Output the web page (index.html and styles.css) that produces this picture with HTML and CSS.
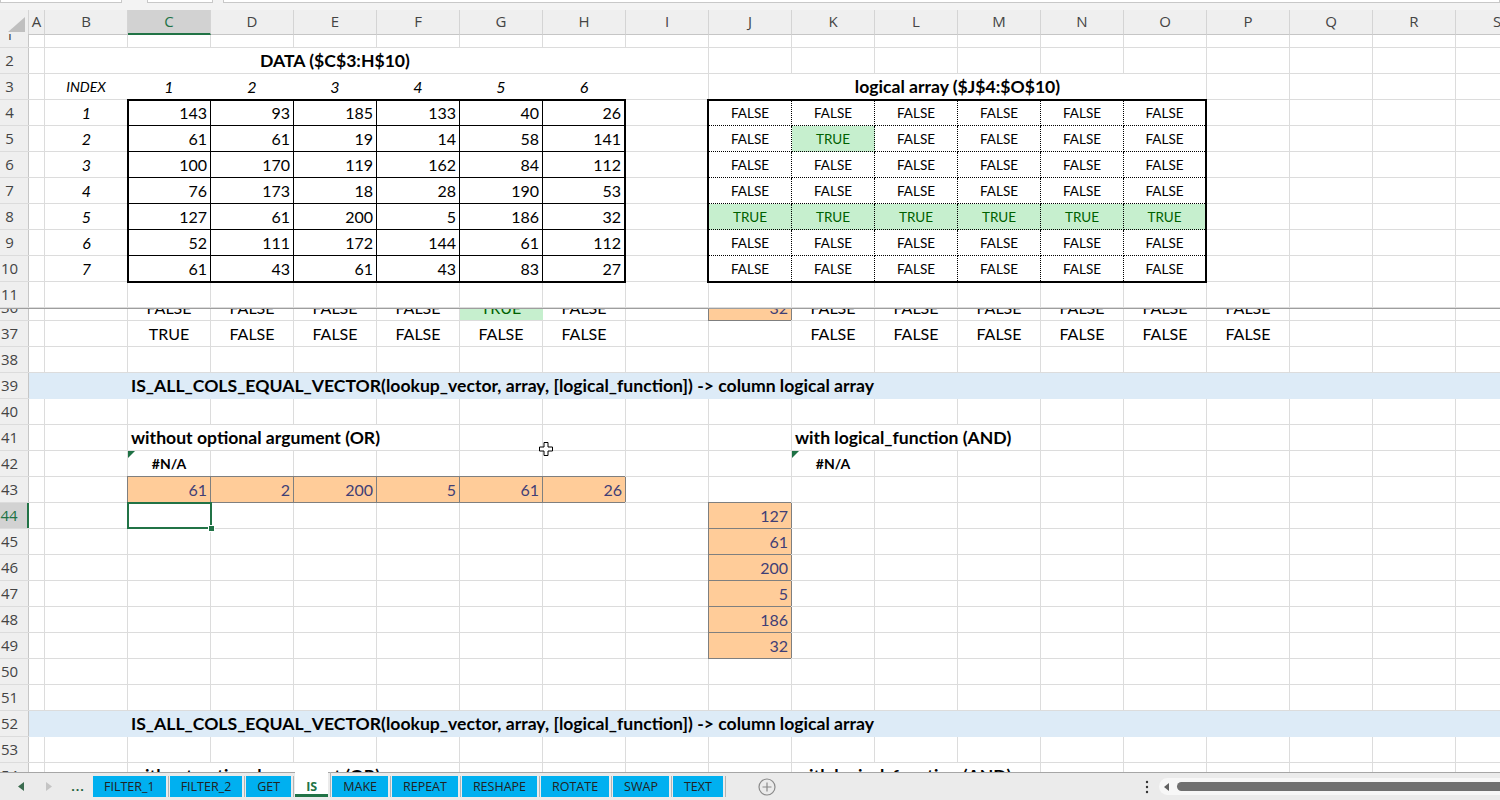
FILE: index.html
```html
<!DOCTYPE html>
<html lang="en">
<head>
    <meta charset="UTF-8">
    <title>IS</title>
    <link rel="stylesheet" href="styles.css">
</head>
<body>
<div class="app">

    <!-- bottom edge of the formula bar -->
    <div class="fbar">
        <div class="fbox name"></div>
        <div class="fbox fx"></div>
        <div class="fbox formula"></div>
    </div>

    <!-- column headers -->
    <div class="colheads">
        <div class="corner"><svg width="17" height="15" viewBox="0 0 17 15"><path d="M17 0V15H0Z" fill="#bfbfbf"/></svg></div>
        <div class="ch">A</div>
        <div class="ch">B</div>
        <div class="ch on">C</div>
        <div class="ch">D</div>
        <div class="ch">E</div>
        <div class="ch">F</div>
        <div class="ch">G</div>
        <div class="ch">H</div>
        <div class="ch">I</div>
        <div class="ch">J</div>
        <div class="ch">K</div>
        <div class="ch">L</div>
        <div class="ch">M</div>
        <div class="ch">N</div>
        <div class="ch">O</div>
        <div class="ch">P</div>
        <div class="ch">Q</div>
        <div class="ch">R</div>
        <div class="ch">S</div>
    </div>

    <!-- frozen rows -->
    <div class="pane top">
        <div class="row clip-a"><div class="rh">1</div></div>

        <div class="row">
            <div class="rh">2</div>
            <div class="cell b mid w sBH">DATA ($C$3:H$10)</div>
            <div class="cell w rl cI"></div>
        </div>

        <div class="row">
            <div class="rh">3</div>
            <div class="cell i mid w small cB">INDEX</div>
            <div class="cell i mid w cC">1</div>
            <div class="cell i mid w cD">2</div>
            <div class="cell i mid w cE">3</div>
            <div class="cell i mid w cF">4</div>
            <div class="cell i mid w cG">5</div>
            <div class="cell i mid w cH">6</div>
            <div class="cell w rl cI"></div>
            <div class="cell b mid w rl sJO">logical array ($J$4:$O$10)</div>
        </div>

        <div class="band">
            <div class="rhs">
                <div class="rh">4</div>
                <div class="rh">5</div>
                <div class="rh">6</div>
                <div class="rh">7</div>
                <div class="rh">8</div>
                <div class="rh">9</div>
                <div class="rh">10</div>
            </div>
            <div class="idx">
                <div>1</div><div>2</div><div>3</div><div>4</div><div>5</div><div>6</div><div>7</div>
            </div>
            <div class="data">
                <div>143</div><div>93</div><div>185</div><div>133</div><div>40</div><div>26</div>
                <div>61</div><div>61</div><div>19</div><div>14</div><div>58</div><div>141</div>
                <div>100</div><div>170</div><div>119</div><div>162</div><div>84</div><div>112</div>
                <div>76</div><div>173</div><div>18</div><div>28</div><div>190</div><div>53</div>
                <div>127</div><div>61</div><div>200</div><div>5</div><div>186</div><div>32</div>
                <div>52</div><div>111</div><div>172</div><div>144</div><div>61</div><div>112</div>
                <div>61</div><div>43</div><div>61</div><div>43</div><div>83</div><div>27</div>
            </div>
            <div class="logic">
                <div>FALSE</div><div>FALSE</div><div>FALSE</div><div>FALSE</div><div>FALSE</div><div>FALSE</div>
                <div>FALSE</div><div class="ok">TRUE</div><div>FALSE</div><div>FALSE</div><div>FALSE</div><div>FALSE</div>
                <div>FALSE</div><div>FALSE</div><div>FALSE</div><div>FALSE</div><div>FALSE</div><div>FALSE</div>
                <div>FALSE</div><div>FALSE</div><div>FALSE</div><div>FALSE</div><div>FALSE</div><div>FALSE</div>
                <div class="ok">TRUE</div><div class="ok">TRUE</div><div class="ok">TRUE</div><div class="ok">TRUE</div><div class="ok">TRUE</div><div class="ok">TRUE</div>
                <div>FALSE</div><div>FALSE</div><div>FALSE</div><div>FALSE</div><div>FALSE</div><div>FALSE</div>
                <div>FALSE</div><div>FALSE</div><div>FALSE</div><div>FALSE</div><div>FALSE</div><div>FALSE</div>
            </div>
        </div>

        <div class="row"><div class="rh">11</div></div>
    </div>

    <div class="split"></div>

    <!-- scrolled rows -->
    <div class="pane bottom">
        <div class="row clip-b">
            <div class="rh">36</div>
            <div class="cell mid cC">FALSE</div>
            <div class="cell mid cD">FALSE</div>
            <div class="cell mid cE">FALSE</div>
            <div class="cell mid cF">FALSE</div>
            <div class="cell mid ok cG">TRUE</div>
            <div class="cell mid cH">FALSE</div>
            <div class="cell inp cJ">32</div>
            <div class="cell mid cK">FALSE</div>
            <div class="cell mid cL">FALSE</div>
            <div class="cell mid cM">FALSE</div>
            <div class="cell mid cN">FALSE</div>
            <div class="cell mid cO">FALSE</div>
            <div class="cell mid cP">FALSE</div>
        </div>

        <div class="row">
            <div class="rh">37</div>
            <div class="cell mid cC">TRUE</div>
            <div class="cell mid cD">FALSE</div>
            <div class="cell mid cE">FALSE</div>
            <div class="cell mid cF">FALSE</div>
            <div class="cell mid cG">FALSE</div>
            <div class="cell mid cH">FALSE</div>
            <div class="cell mid cK">FALSE</div>
            <div class="cell mid cL">FALSE</div>
            <div class="cell mid cM">FALSE</div>
            <div class="cell mid cN">FALSE</div>
            <div class="cell mid cO">FALSE</div>
            <div class="cell mid cP">FALSE</div>
        </div>

        <div class="row"><div class="rh">38</div></div>

        <div class="row hl">
            <div class="rh">39</div>
            <div class="cell b sCend">IS_ALL_COLS_EQUAL_VECTOR(lookup_vector, array, [logical_function]) -&gt; column logical array</div>
        </div>

        <div class="row"><div class="rh">40</div></div>

        <div class="row">
            <div class="rh">41</div>
            <div class="cell b w rl sCF">without optional argument (OR)</div>
            <div class="cell b w rl sKM">with logical_function (AND)</div>
        </div>

        <div class="row">
            <div class="rh">42</div>
            <div class="cell na cC">#N/A</div>
            <div class="cell na cK">#N/A</div>
        </div>

        <div class="row">
            <div class="rh">43</div>
            <div class="cell inp cC">61</div>
            <div class="cell inp cD">2</div>
            <div class="cell inp cE">200</div>
            <div class="cell inp cF">5</div>
            <div class="cell inp cG">61</div>
            <div class="cell inp cH">26</div>
        </div>

        <div class="row">
            <div class="rh on">44</div>
            <div class="cell sel cC"></div>
            <div class="cell inp cJ">127</div>
        </div>
        <div class="row">
            <div class="rh">45</div>
            <div class="cell inp cJ">61</div>
        </div>
        <div class="row">
            <div class="rh">46</div>
            <div class="cell inp cJ">200</div>
        </div>
        <div class="row">
            <div class="rh">47</div>
            <div class="cell inp cJ">5</div>
        </div>
        <div class="row">
            <div class="rh">48</div>
            <div class="cell inp cJ">186</div>
        </div>
        <div class="row">
            <div class="rh">49</div>
            <div class="cell inp cJ">32</div>
        </div>

        <div class="row"><div class="rh">50</div></div>
        <div class="row"><div class="rh">51</div></div>

        <div class="row hl">
            <div class="rh">52</div>
            <div class="cell b sCend">IS_ALL_COLS_EQUAL_VECTOR(lookup_vector, array, [logical_function]) -&gt; column logical array</div>
        </div>

        <div class="row"><div class="rh">53</div></div>

        <div class="row">
            <div class="rh">54</div>
            <div class="cell b w rl sCF">without optional argument (OR)</div>
            <div class="cell b w rl sKM">with logical_function (AND)</div>
        </div>
    </div>

    <!-- sheet tabs -->
    <div class="tabbar">
        <div class="nav">
            <span class="navbtn"><svg width="6" height="9" viewBox="0 0 6 9"><path d="M6 0V9L0 4.5Z" fill="#3a6b4f"/></svg></span>
            <span class="navbtn"><svg width="6" height="9" viewBox="0 0 6 9"><path d="M0 0V9L6 4.5Z" fill="#c4c4c4"/></svg></span>
            <span class="navbtn more">...</span>
        </div>
        <div class="tabs">
            <div class="tab"><span>FILTER_1</span></div>
            <div class="tab"><span>FILTER_2</span></div>
            <div class="tab"><span>GET</span></div>
            <div class="tab on"><span>IS</span></div>
            <div class="tab"><span>MAKE</span></div>
            <div class="tab"><span>REPEAT</span></div>
            <div class="tab"><span>RESHAPE</span></div>
            <div class="tab"><span>ROTATE</span></div>
            <div class="tab"><span>SWAP</span></div>
            <div class="tab"><span>TEXT</span></div>
        </div>
        <div class="add">
            <svg width="18" height="18" viewBox="0 0 18 18">
                <circle cx="9" cy="9" r="8" fill="none" stroke="#8a8a8a" stroke-width="1.2"/>
                <path d="M9 4.5v9M4.5 9h9" stroke="#8a8a8a" stroke-width="1.2"/>
            </svg>
        </div>
        <div class="vdots">
            <svg width="4" height="14" viewBox="0 0 4 14">
                <circle cx="2" cy="2" r="1.2" fill="#333"/>
                <circle cx="2" cy="7" r="1.2" fill="#333"/>
                <circle cx="2" cy="12" r="1.2" fill="#333"/>
            </svg>
        </div>
        <div class="hscroll">
            <svg width="5" height="8" viewBox="0 0 5 8"><path d="M5 0V8L0 4Z" fill="#606060"/></svg>
            <div class="thumb"></div>
        </div>
    </div>

    <svg class="cursor" width="14" height="14" viewBox="0 0 14 14">
        <path d="M5 .5h4v4.5h4.5v4H9v4.5H5V9H.5V5H5z" fill="#fff" stroke="#000"/>
    </svg>
</div>
</body>
</html>
```

FILE: styles.css
```css
* {
    box-sizing: border-box;
}

body {
    margin: 0;
    font-family: "Lato", "Liberation Sans", sans-serif;
    font-size: 16px;
    color: #000;
    background: #fff;
}

.app {
    position: relative;
    width: 1500px;
    height: 800px;
    overflow: hidden;
}

/* formula bar edge */
.fbar {
    height: 10px;
    display: flex;
    background: #f3f3f3;
}

.fbox {
    height: 3px;
    background: #fff;
    border: 1px solid #c8c8c8;
    border-top: 0;
}

.fbox.name {
    width: 122px;
}

.fbox.fx {
    width: 66px;
    margin-left: 25px;
}

.fbox.formula {
    flex: 1;
    margin-left: 10px;
}

/* sheet grid */
.colheads,
.row,
.band {
    display: grid;
    grid-template-columns: 29px 16px repeat(18, 83px);
}

.colheads {
    height: 24px;
    background: #efefef;
    font-family: "Open Sans", sans-serif;
    font-size: 15px;
    color: #444;
}

.corner,
.ch {
    border-right: 1px solid #d4d4d4;
    border-bottom: 1px solid #c6c6c6;
}

.corner {
    display: flex;
    align-items: flex-end;
    justify-content: flex-end;
    padding: 0 3px 2px 0;
}

.ch {
    text-align: center;
    line-height: 23px;
}

.ch.on {
    background: #d2d2d2;
    color: #217346;
    border-bottom: 2px solid #217346;
}

.pane {
    overflow: hidden;
}

.pane.top {
    height: 274px;
}

.pane.bottom {
    height: 463px;
}

.split {
    height: 1px;
    background: #9e9e9e;
}

.row {
    height: 26px;
    grid-template-rows: 25px;
    border-bottom: 1px solid #dcdcdc;
    background-image: linear-gradient(to right, transparent 82px, #dcdcdc 82px);
    background-size: 83px 100%;
    background-position: 45px 0;
}

.row > * {
    grid-row: 1;
}

.row.clip-a {
    margin-top: -12px;
}

.row.clip-b {
    margin-top: -14px;
}

.row.hl {
    background: #ddebf7;
    border-bottom-color: #ddebf7;
}

.row.hl .rh {
    box-shadow: 0 1px #dcdcdc;
}

.rh {
    grid-column: 1;
    background: #efefef;
    border-right: 1px solid #c6c6c6;
    font-family: "Open Sans", sans-serif;
    font-size: 15px;
    color: #444;
    text-align: center;
    padding-right: 9px;
    line-height: 25px;
}

.rh.on {
    background: #d2d2d2;
    color: #217346;
    border-right: 2px solid #217346;
}

/* cells */
.cell {
    line-height: 25px;
    padding: 0 4px 0 3px;
    white-space: nowrap;
}

.mid {
    text-align: center;
}

.b {
    font-size: 17.6px;
    font-weight: 700;
}

.i {
    font-style: italic;
}

.small {
    font-size: 14px;
}

.w {
    background: #fff;
}

.rl {
    box-shadow: inset -1px 0 #dcdcdc;
}

.ok {
    background: #c6efce;
    color: #006100;
}

.inp {
    background: #ffcc99;
    color: #3f3f76;
    text-align: right;
    box-shadow: inset -1px 0 #7f7f7f, -1px -1px #7f7f7f, -1px 1px #7f7f7f;
}

.na {
    position: relative;
    font-size: 14px;
    font-weight: 700;
    text-align: center;
}

.na::before {
    content: "";
    position: absolute;
    left: 0;
    top: 0;
    width: 7px;
    height: 7px;
    background: #1e7145;
    clip-path: polygon(0 0, 100% 0, 0 100%);
}

.sel {
    position: relative;
    box-shadow: 0 0 0 1px #217346, inset 0 0 0 1px #217346;
}

.sel::after {
    content: "";
    position: absolute;
    right: -3px;
    bottom: -3px;
    width: 5px;
    height: 5px;
    background: #217346;
    box-shadow: 0 0 0 1px #fff;
}

.cB { grid-column: 3; }
.cC { grid-column: 4; }
.cD { grid-column: 5; }
.cE { grid-column: 6; }
.cF { grid-column: 7; }
.cG { grid-column: 8; }
.cH { grid-column: 9; }
.cI { grid-column: 10; }
.cJ { grid-column: 11; }
.cK { grid-column: 12; }
.cL { grid-column: 13; }
.cM { grid-column: 14; }
.cN { grid-column: 15; }
.cO { grid-column: 16; }
.cP { grid-column: 17; }

.sBH { grid-column: 3 / 10; }
.sCF { grid-column: 4 / 8; }
.sJO { grid-column: 11 / 17; }
.sKM { grid-column: 12 / 15; }
.sCend { grid-column: 4 / -1; }

/* rows 4-10 with the two bordered ranges */
.band {
    grid-template-rows: repeat(7, 26px);
    background-image:
        linear-gradient(to right, transparent 82px, #dcdcdc 82px),
        linear-gradient(to bottom, transparent 25px, #dcdcdc 25px);
    background-size: 83px 100%, 100% 26px;
    background-position: 45px 0, 0 0;
}

.rhs {
    grid-column: 1;
    grid-row: 1 / -1;
}

.rhs .rh {
    height: 25px;
    margin-bottom: 1px;
}

.idx {
    grid-column: 3;
    grid-row: 1 / -1;
    font-style: italic;
    text-align: center;
}

.idx div {
    height: 26px;
    line-height: 25px;
}

.data,
.logic {
    grid-row: 1 / -1;
    display: grid;
    grid-template-rows: 25px repeat(5, 26px) 25px;
    border: 2px solid #000;
    background: #fff;
}

.data {
    grid-column: 4 / 10;
    grid-template-columns: 82px repeat(4, 83px) 81px;
    margin: -1px 0 -1px -1px;
}

.logic {
    grid-column: 11 / 17;
    grid-template-columns: repeat(5, 83px) 81px;
    margin: -1px 0 -1px -2px;
    font-size: 13.5px;
}

.data > div,
.logic > div {
    display: flex;
    align-items: flex-end;
    line-height: 24px;
}

.data > div {
    justify-content: flex-end;
    padding-right: 3px;
    border-right: 1px solid #000;
    border-bottom: 1px solid #000;
}

.logic > div {
    justify-content: center;
    border-right: 1px dotted #000;
    border-bottom: 1px dotted #000;
}

.data > div:nth-child(6n),
.logic > div:nth-child(6n) {
    border-right: 0;
}

.data > div:nth-last-child(-n+6),
.logic > div:nth-last-child(-n+6) {
    border-bottom: 0;
}

/* sheet tabs */
.tabbar {
    height: 28px;
    display: flex;
    align-items: flex-start;
    background: #ebebeb;
    border-top: 1px solid #a6a6a6;
    font-family: "Open Sans", sans-serif;
    font-size: 12.5px;
    color: #222;
}

.nav {
    display: flex;
    align-items: center;
    width: 93px;
    height: 27px;
    padding-left: 7px;
}

.navbtn {
    width: 28px;
    display: flex;
    justify-content: center;
}

.navbtn.more {
    width: 30px;
    color: #1f5f3b;
    font-weight: 700;
    letter-spacing: 1px;
}

.tabs {
    display: flex;
    align-items: flex-start;
    margin-top: 3px;
}

.tab {
    height: 21px;
    padding-right: 2px;
    margin-right: 1px;
    border-right: 1px solid #b4b4b4;
}

.tab span {
    display: block;
    height: 21px;
    line-height: 21px;
    padding: 0 11px;
    background: #00b0f0;
}

.tab.on {
    height: 25px;
    margin-top: -4px;
}

.tab.on span {
    height: 25px;
    padding-top: 4px;
    background: #fff;
    color: #217346;
    font-weight: 700;
    border-bottom: 3px solid #217346;
}

.add {
    display: flex;
    align-self: center;
    margin-left: 31px;
}

.vdots {
    display: flex;
    align-self: center;
    margin-left: auto;
}

.hscroll {
    display: flex;
    align-items: center;
    align-self: center;
    width: 341px;
    height: 17px;
    margin-left: 10px;
    padding-left: 5px;
    background: #f7f7f7;
    border-radius: 9px 0 0 9px;
}

.thumb {
    flex: 1;
    height: 9px;
    margin-left: 8px;
    background: #707070;
    border-radius: 5px 0 0 5px;
}

.cursor {
    position: absolute;
    left: 539px;
    top: 442px;
}
```
